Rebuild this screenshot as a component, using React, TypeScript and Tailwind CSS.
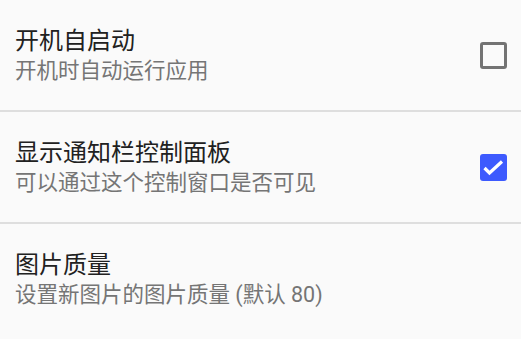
import React from "react"

const font = { fontFamily: 'Roboto, "Noto Sans CJK SC", sans-serif' }

type Item = {
  title: string
  summary: string
  checkbox?: boolean
  checked?: boolean
}

const items: Item[] = [
  { title: "开机自启动", summary: "开机时自动运行应用", checkbox: true, checked: false },
  { title: "显示通知栏控制面板", summary: "可以通过这个控制窗口是否可见", checkbox: true, checked: true },
  { title: "图片质量", summary: "设置新图片的图片质量 (默认 80)" },
]

function Checkbox({ checked }: { checked?: boolean }) {
  if (checked) {
    return (
      <div className="flex h-[27px] w-[27px] items-center justify-center rounded-[3px] bg-[#3d5afe]">
        <svg width="27" height="27" viewBox="0 0 27 27" fill="none">
          <path d="M4.5 14l5 5L22 7.5" stroke="white" strokeWidth="3.2" />
        </svg>
      </div>
    )
  }
  return <div className="h-[27px] w-[27px] rounded-[3px] border-[3px] border-[#737373]" />
}

export default function App() {
  return (
    <div className="min-h-screen bg-[#fafafa]" style={font}>
      {items.map((item, i) => (
        <div key={item.title}>
          {i > 0 && <div className="h-[2px] bg-[#dedede]" />}
          <div className="flex h-[110px] items-center justify-between pl-[15px] pr-[14px]">
            <div className="flex flex-col">
              <div className="text-[24px] leading-[32px] text-[#212121]">{item.title}</div>
              <div className="text-[21.5px] leading-[28px] text-[#757575]">{item.summary}</div>
            </div>
            {item.checkbox && <Checkbox checked={item.checked} />}
          </div>
        </div>
      ))}
    </div>
  )
}
